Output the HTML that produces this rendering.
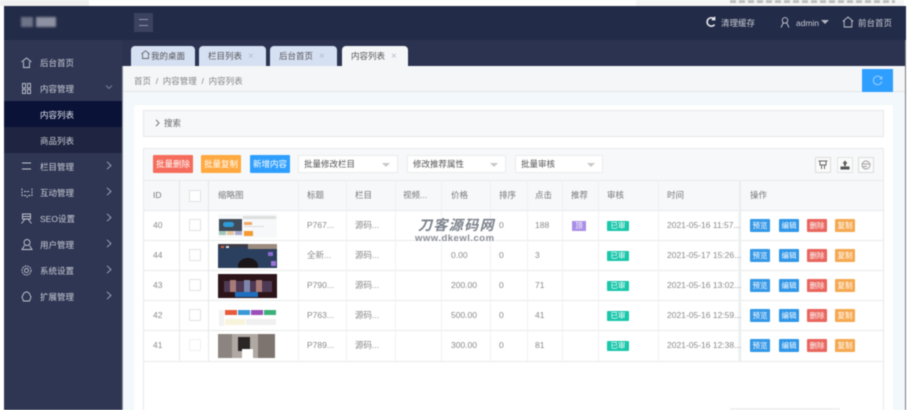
<!DOCTYPE html>
<html lang="zh">
<head>
<meta charset="utf-8">
<title>内容列表</title>
<style>
html,body{margin:0;padding:0;background:#fff}
body{width:911px;height:410px;overflow:hidden;position:relative;font-family:"Liberation Sans","Noto Sans CJK SC",sans-serif;font-size:8.5px;color:#666}
#w{position:absolute;left:0;top:0;width:911px;height:410px;filter:blur(.5px)}
.a{position:absolute;white-space:nowrap}
.b{position:absolute}
.m{color:#c9ccd6;line-height:12px}
.ico{position:absolute;fill:none;stroke:#c4c7d2;stroke-width:.9}
.btn{position:absolute;color:#fff;text-align:center;border-radius:1px}
.sel{position:absolute;top:155px;height:18px;background:#fff;border:1px solid #ececec;box-sizing:border-box;line-height:16px;padding-left:5px;color:#555}
.sel i{position:absolute;right:7px;top:7px;border:4px solid transparent;border-top:4px solid #c8c8c8;border-bottom:0}
.v{position:absolute;width:1px;background:#f0f1f3}
.h{position:absolute;left:143px;width:741px;height:1px;background:#e9eaeb}
.th,.td{position:absolute;line-height:12px;white-space:nowrap}
.th{color:#777;top:189px}
.td{color:#8a8a8a}
.cb{position:absolute;left:189px;width:10px;height:10px;background:#fff;border:1px solid #e2e2e2;border-radius:1px}
.op{position:absolute;width:20px;height:13px;line-height:13px;font-size:7.5px;color:#fff;text-align:center;border-radius:1px}
.st{position:absolute;left:607px;width:22px;height:10px;line-height:10px;background:#1ac7ab;color:#fff;font-size:7.5px;text-align:center;border-radius:1px}
.th1{position:absolute;left:218px;width:59px;height:24px;overflow:hidden}
.th1 div{position:absolute}
.tab{position:absolute;top:46px;height:20px;line-height:21px;background:#d6e0f3;border-radius:4px 4px 0 0;color:#555;padding-left:9px;box-sizing:border-box}
.tab span{color:#b4bccd;margin-left:6px;font-size:10px}
</style>
</head>
<body>
<div id="w">
<!-- top strip -->
<div class="b" style="left:0;top:0;width:89px;height:6px;background:#f0f0f0"></div>
<div class="b" style="left:636px;top:0;width:268px;height:6px;background:#f5f5f5"></div>
<div class="b" style="left:730px;top:0;width:165px;height:3px;background:repeating-linear-gradient(90deg,#bdbdbd 0 6px,#f0f0f0 6px 9px)"></div>

<!-- header -->
<div class="b" style="left:4px;top:6px;width:902px;height:34px;background:#222b47"></div>
<div class="b" style="left:21px;top:17px;width:12px;height:10px;background:#6d7388;filter:blur(1px)"></div>
<div class="b" style="left:36px;top:17px;width:20px;height:10px;background:#8d91a1;filter:blur(1px)"></div>
<div class="b" style="left:134px;top:13px;width:19px;height:19px;background:#3a4260"></div>
<div class="b" style="left:139px;top:19px;width:9px;height:1px;background:#8f94a6"></div>
<div class="b" style="left:139px;top:25px;width:9px;height:1px;background:#8f94a6"></div>

<svg class="ico" style="left:705px;top:16px;stroke:#e6e8ee;stroke-width:1.6" width="11" height="12" viewBox="0 0 11 12"><path d="M9.500 3.200A4.200 4.200 0 1 0 9.600 8.600M9.600 .8V3.600H6.800"/></svg>
<div class="a" style="left:721px;top:17px;color:#c9ccd6;line-height:12px">清理缓存</div>
<svg class="ico" style="left:780px;top:17px" width="10" height="11" viewBox="0 0 10 11"><circle cx="5" cy="3.400" r="2.800"/><path d="M1 10.500L3.200 6M9 10.500L6.800 6"/></svg>
<div class="a" style="left:796px;top:17px;color:#c9ccd6;line-height:12px">admin</div>
<div class="b" style="left:821px;top:20px;border:4px solid transparent;border-top:4px solid #b4b7c2;border-bottom:0"></div>
<svg class="ico" style="left:842px;top:16px" width="12" height="12" viewBox="0 0 12 12"><path d="M.8 5.500L6 1l5.200 4.500M2.200 4.600V11H9.800V4.600"/></svg>
<div class="a" style="left:858px;top:17px;color:#c9ccd6;line-height:12px">前台首页</div>

<!-- tab bar -->
<div class="b" style="left:122px;top:40px;width:784px;height:26px;background:#2b3350"></div>
<div class="tab" style="left:131px;width:64px;padding-left:20px">我的桌面</div>
<svg class="ico" style="left:141px;top:50px;stroke:#666" width="9" height="9" viewBox="0 0 9 9"><path d="M.5 4L4.500 .8 8.500 4M1.500 3.500V8.500H7.500V3.500"/></svg>
<div class="tab" style="left:199px;width:67px">栏目列表<span>×</span></div>
<div class="tab" style="left:270px;width:67px">后台首页<span>×</span></div>
<div class="tab" style="left:342px;width:66px;background:#f5f6f8">内容列表<span>×</span></div>

<!-- sidebar -->
<div class="b" style="left:4px;top:40px;width:118px;height:370px;background:#2f3653"></div>
<div class="b" style="left:122px;top:66px;width:1px;height:344px;background:#8c8f9b"></div>
<div class="b" style="left:4px;top:101px;width:118px;height:26px;background:#0b1238"></div>
<div class="b" style="left:4px;top:127px;width:118px;height:26px;background:#1f2540"></div>

<svg class="ico" style="left:21px;top:57px" width="11" height="11" viewBox="0 0 11 11"><path d="M.5 5L5.500 1l5 4M2.500 4.500V10.500H8.500V4.500"/></svg>
<div class="a m" style="left:40px;top:57px">后台首页</div>
<svg class="ico" style="left:21px;top:83px" width="11" height="11" viewBox="0 0 11 11"><rect x="1.500" y=".5" width="3" height="4.500"/><rect x="6.500" y=".5" width="3" height="4.500"/><rect x="1.500" y="6.500" width="3" height="4"/><rect x="6.500" y="6.500" width="3" height="4"/></svg>
<div class="a m" style="left:40px;top:83px">内容管理</div>
<svg class="ico" style="left:105px;top:84px;stroke:#80859a" width="8" height="6" viewBox="0 0 8 6"><path d="M1 1.500L4 4.500 7 1.500"/></svg>
<div class="a" style="left:40px;top:109px;color:#e0e3ea;line-height:12px">内容列表</div>
<div class="a" style="left:40px;top:135px;color:#c9ccd6;line-height:12px">商品列表</div>

<svg class="ico" style="left:21px;top:161px" width="11" height="10" viewBox="0 0 11 10"><path d="M1 2H10M1 8H10"/></svg>
<div class="a m" style="left:40px;top:161px">栏目管理</div>
<svg class="ico" style="left:21px;top:187px" width="12" height="11" viewBox="0 0 12 11"><path d="M1 1.500V8.500H5L6 10 7 8.500H11V1.500M3 4.500H9" stroke-dasharray="2 1"/></svg>
<div class="a m" style="left:40px;top:187px">互动管理</div>
<svg class="ico" style="left:21px;top:213px" width="11" height="11" viewBox="0 0 11 11"><path d="M1.500 1H9.500V6H1.500ZM1.500 3.500H9.500M.5 10.500L4 6M10.500 10.500L7 6"/></svg>
<div class="a m" style="left:40px;top:213px">SEO设置</div>
<svg class="ico" style="left:21px;top:239px" width="12" height="11" viewBox="0 0 12 11"><circle cx="6" cy="3.500" r="3"/><path d="M3.500 6.500L1 10.500H11L8.500 6.500"/></svg>
<div class="a m" style="left:40px;top:239px">用户管理</div>
<svg class="ico" style="left:21px;top:265px" width="11" height="11" viewBox="0 0 11 11"><circle cx="5.500" cy="5.500" r="4.500" stroke-dasharray="2 .7"/><circle cx="5.500" cy="5.500" r="2"/></svg>
<div class="a m" style="left:40px;top:265px">系统设置</div>
<svg class="ico" style="left:21px;top:291px" width="11" height="11" viewBox="0 0 11 11"><path d="M3 2L5.500 .8 8 2 10 6 8.500 10H2.500L1 6Z"/></svg>
<div class="a m" style="left:40px;top:291px">扩展管理</div>

<svg class="ico" style="left:106px;top:161px;stroke:#a4a8b8" width="6" height="9" viewBox="0 0 6 9"><path d="M1 .8L5 4.500 1 8.200"/></svg>
<svg class="ico" style="left:106px;top:187px;stroke:#a4a8b8" width="6" height="9" viewBox="0 0 6 9"><path d="M1 .8L5 4.500 1 8.200"/></svg>
<svg class="ico" style="left:106px;top:213px;stroke:#a4a8b8" width="6" height="9" viewBox="0 0 6 9"><path d="M1 .8L5 4.500 1 8.200"/></svg>
<svg class="ico" style="left:106px;top:239px;stroke:#a4a8b8" width="6" height="9" viewBox="0 0 6 9"><path d="M1 .8L5 4.500 1 8.200"/></svg>
<svg class="ico" style="left:106px;top:265px;stroke:#a4a8b8" width="6" height="9" viewBox="0 0 6 9"><path d="M1 .8L5 4.500 1 8.200"/></svg>
<svg class="ico" style="left:106px;top:291px;stroke:#a4a8b8" width="6" height="9" viewBox="0 0 6 9"><path d="M1 .8L5 4.500 1 8.200"/></svg>

<!-- content background -->
<div class="b" style="left:123px;top:66px;width:782px;height:26px;background:#f5f6f8;border-bottom:1px solid #e4e6e9;box-sizing:border-box"></div>
<div class="b" style="left:123px;top:92px;width:782px;height:318px;background:#f2f8fc"></div>
<div class="b" style="left:905px;top:40px;width:1px;height:370px;background:#77797f"></div>
<div class="a" style="left:134px;top:75px;color:#858585;line-height:12px">首页&nbsp;&nbsp;/&nbsp;&nbsp;内容管理&nbsp;&nbsp;/&nbsp;&nbsp;内容列表</div>
<div class="b" style="left:862px;top:69px;width:31px;height:23px;background:#2f9fff"></div>
<svg class="ico" style="left:872px;top:75px;stroke:#a9d5ff" width="11" height="11" viewBox="0 0 11 11"><path d="M9.500 3.500A4.300 4.300 0 1 0 9.800 6.500M9.800 1.500V3.800H7.500"/></svg>

<!-- card -->
<div class="b" style="left:134px;top:105px;width:759px;height:305px;background:#fff"></div>
<div class="b" style="left:143px;top:110px;width:741px;height:27px;background:#f7f8f9;border:1px solid #e6e7e9;box-sizing:border-box"></div>
<svg class="ico" style="left:155px;top:119px;stroke:#666" width="5" height="8" viewBox="0 0 5 8"><path d="M1 .8L4 4 1 7.200"/></svg>
<div class="a" style="left:164px;top:117px;color:#666;line-height:12px">搜索</div>

<!-- table frame -->
<div class="b" style="left:143px;top:148px;width:741px;height:262px;border:1px solid #e8e9ea;border-bottom:0;box-sizing:border-box"></div>
<div class="b" style="left:144px;top:149px;width:739px;height:61px;background:#f7f8f9"></div>
<div class="h" style="top:180px"></div>
<div class="h" style="top:210px"></div>
<div class="h" style="top:240px"></div>
<div class="h" style="top:270px"></div>
<div class="h" style="top:300px"></div>
<div class="h" style="top:330px"></div>
<div class="h" style="top:361px"></div>

<div class="v" style="left:179px;top:180px;height:181px;background:#e6e7e9"></div>
<div class="v" style="left:208px;top:180px;height:181px;background:#e6e7e9"></div>
<div class="v" style="left:298px;top:180px;height:181px"></div>
<div class="v" style="left:346px;top:180px;height:181px"></div>
<div class="v" style="left:395px;top:180px;height:181px"></div>
<div class="v" style="left:441px;top:180px;height:181px"></div>
<div class="v" style="left:490px;top:180px;height:181px"></div>
<div class="v" style="left:527px;top:180px;height:181px"></div>
<div class="v" style="left:562px;top:180px;height:181px"></div>
<div class="v" style="left:598px;top:180px;height:181px"></div>
<div class="v" style="left:658px;top:180px;height:181px"></div>
<div class="b" style="left:738px;top:180px;width:3px;height:181px;background:linear-gradient(90deg,#f7f8f9,#e6e7e9)"></div>

<!-- toolbar -->
<div class="btn" style="left:153px;top:155px;width:40px;height:18px;line-height:18px;background:#f56c5c">批量删除</div>
<div class="btn" style="left:201px;top:155px;width:40px;height:18px;line-height:18px;background:#ffa940">批量复制</div>
<div class="btn" style="left:250px;top:155px;width:40px;height:18px;line-height:18px;background:#2f9fff">新增内容</div>
<div class="sel" style="left:298px;width:100px">批量修改栏目<i></i></div>
<div class="sel" style="left:407px;width:99px">修改推荐属性<i></i></div>
<div class="sel" style="left:515px;width:88px">批量审核<i></i></div>

<div class="b" style="left:815px;top:157px;width:16px;height:16px;border:1px solid #dcdcdc;box-sizing:border-box;background:#fafafa"></div>
<svg class="ico" style="left:818px;top:160px;stroke:#666" width="10" height="10" viewBox="0 0 10 10"><path d="M.5 1H9.500M2 1V5H8V1M3.500 5V9M6.500 5V9" stroke-width="1"/></svg>
<div class="b" style="left:837px;top:157px;width:16px;height:16px;border:1px solid #e4e4e4;box-sizing:border-box;background:#fafafa"></div>
<svg class="b" style="left:840px;top:160px" width="10" height="10" viewBox="0 0 10 10"><path d="M5 .5L7.500 3.500H6V6H4V3.500H2.500ZM.5 6.500H9.500V9.500H.5Z" fill="#555"/></svg>
<div class="b" style="left:858px;top:157px;width:16px;height:16px;border:1px solid #dcdcdc;box-sizing:border-box;background:#fafafa"></div>
<svg class="ico" style="left:861px;top:160px;stroke:#999" width="10" height="10" viewBox="0 0 10 10"><circle cx="5" cy="5" r="4"/><path d="M2 4H8M2 6.500H6"/></svg>

<!-- header row -->
<div class="th" style="left:153px">ID</div>
<div class="cb" style="top:190px"></div>
<div class="th" style="left:218px">缩略图</div>
<div class="th" style="left:307px">标题</div>
<div class="th" style="left:355px">栏目</div>
<div class="th" style="left:403px">视频...</div>
<div class="th" style="left:451px">价格</div>
<div class="th" style="left:499px">排序</div>
<div class="th" style="left:535px">点击</div>
<div class="th" style="left:571px">推荐</div>
<div class="th" style="left:607px">审核</div>
<div class="th" style="left:667px">时间</div>
<div class="th" style="left:750px">操作</div>

<!-- row 40 -->
<div class="td" style="left:153px;top:219px">40</div><div class="cb" style="top:219px"></div>
<div class="th1" style="top:214px;background:#f7f8f9">
  <div style="left:1px;top:5px;width:23px;height:12px;background:#3f4b58"></div>
  <div style="left:5px;top:8px;width:11px;height:5px;background:#2e9bd8;border-radius:3px"></div>
  <div style="left:1px;top:17px;width:7px;height:4px;background:#9fc7b8"></div>
  <div style="left:9px;top:17px;width:7px;height:4px;background:#e4c49a"></div>
  <div style="left:17px;top:17px;width:7px;height:4px;background:#a9a9d0"></div>
  <div style="left:25px;top:2px;width:33px;height:3px;background:#dedede"></div>
  <div style="left:26px;top:8px;width:8px;height:3px;background:#f0a868"></div>
  <div style="left:26px;top:12px;width:20px;height:1px;background:#ddd"></div>
  <div style="left:26px;top:17px;width:9px;height:5px;background:#f39a30"></div>
</div>
<div class="td" style="left:307px;top:219px">P767...</div>
<div class="td" style="left:355px;top:219px">源码...</div>
<div class="td" style="left:499px;top:219px">0</div>
<div class="td" style="left:535px;top:219px">188</div>
<div class="b" style="left:572px;top:221px;width:14px;height:10px;line-height:10px;background:#a98ee6;color:#fff;text-align:center;font-size:7.5px">顶</div>
<div class="st" style="top:221px">已审</div>
<div class="td" style="left:667px;top:219px">2021-05-16 11:57...</div>
<div class="op" style="left:750px;top:219px;background:#3498e8">预览</div><div class="op" style="left:779px;top:219px;background:#2f96e8">编辑</div><div class="op" style="left:807px;top:219px;background:#e9645c">删除</div><div class="op" style="left:835px;top:219px;background:#f5a84f">复制</div>

<!-- row 44 -->
<div class="td" style="left:153px;top:249px">44</div><div class="cb" style="top:249px"></div>
<div class="th1" style="top:244px;background:#2b3f5e">
  <div style="left:0;top:0;width:59px;height:3px;background:#3d3a44"></div>
  <div style="left:30px;top:0;width:29px;height:5px;background:#9c8c80"></div>
  <div style="left:3px;top:2px;width:3px;height:2px;background:#d8603c"></div>
  <div style="left:8px;top:2px;width:3px;height:2px;background:#e0e0e0"></div>
  <div style="left:20px;top:14px;width:20px;height:16px;background:#1a1517;border-radius:50%"></div>
  <div style="left:50px;top:8px;width:5px;height:4px;background:#8a6ad0"></div>
  <div style="left:53px;top:17px;width:5px;height:5px;background:#9a72d8"></div>
</div>
<div class="td" style="left:307px;top:249px">全新...</div>
<div class="td" style="left:355px;top:249px">源码...</div>
<div class="td" style="left:451px;top:249px">0.00</div>
<div class="td" style="left:499px;top:249px">0</div>
<div class="td" style="left:535px;top:249px">3</div>
<div class="st" style="top:251px">已审</div>
<div class="td" style="left:667px;top:249px">2021-05-17 15:26...</div>
<div class="op" style="left:750px;top:249px;background:#3498e8">预览</div><div class="op" style="left:779px;top:249px;background:#2f96e8">编辑</div><div class="op" style="left:807px;top:249px;background:#e9645c">删除</div><div class="op" style="left:835px;top:249px;background:#f5a84f">复制</div>

<!-- row 43 -->
<div class="td" style="left:153px;top:279px">43</div><div class="cb" style="top:279px"></div>
<div class="th1" style="top:274px;background:#2c1418">
  <div style="left:6px;top:7px;width:48px;height:11px;background:#4f3a55"></div>
  <div style="left:12px;top:6px;width:6px;height:12px;background:#a87a78"></div>
  <div style="left:26px;top:6px;width:6px;height:12px;background:#7d86ad"></div>
  <div style="left:38px;top:6px;width:6px;height:12px;background:#a87a78"></div>
  <div style="left:17px;top:18px;width:23px;height:5px;background:#1f6fc0"></div>
</div>
<div class="td" style="left:307px;top:279px">P790...</div>
<div class="td" style="left:355px;top:279px">源码...</div>
<div class="td" style="left:451px;top:279px">200.00</div>
<div class="td" style="left:499px;top:279px">0</div>
<div class="td" style="left:535px;top:279px">71</div>
<div class="st" style="top:281px">已审</div>
<div class="td" style="left:667px;top:279px">2021-05-16 13:02...</div>
<div class="op" style="left:750px;top:279px;background:#3498e8">预览</div><div class="op" style="left:779px;top:279px;background:#2f96e8">编辑</div><div class="op" style="left:807px;top:279px;background:#e9645c">删除</div><div class="op" style="left:835px;top:279px;background:#f5a84f">复制</div>

<!-- row 42 -->
<div class="td" style="left:153px;top:309px">42</div><div class="cb" style="top:309px"></div>
<div class="th1" style="top:304px;background:#fff">
  <div style="left:7px;top:6px;width:12px;height:5px;background:#e85a3c"></div>
  <div style="left:20px;top:6px;width:12px;height:5px;background:#3a9ad8"></div>
  <div style="left:33px;top:6px;width:12px;height:5px;background:#9a50b8"></div>
  <div style="left:46px;top:6px;width:12px;height:5px;background:#3cb078"></div>
  <div style="left:7px;top:15px;width:20px;height:6px;background:#f8f4dc"></div>
  <div style="left:28px;top:15px;width:30px;height:6px;background:#f0f0f0"></div>
  <div style="left:1px;top:6px;width:5px;height:16px;background:#f2f2f2"></div>
</div>
<div class="td" style="left:307px;top:309px">P763...</div>
<div class="td" style="left:355px;top:309px">源码...</div>
<div class="td" style="left:451px;top:309px">500.00</div>
<div class="td" style="left:499px;top:309px">0</div>
<div class="td" style="left:535px;top:309px">41</div>
<div class="st" style="top:311px">已审</div>
<div class="td" style="left:667px;top:309px">2021-05-16 12:59...</div>
<div class="op" style="left:750px;top:309px;background:#3498e8">预览</div><div class="op" style="left:779px;top:309px;background:#2f96e8">编辑</div><div class="op" style="left:807px;top:309px;background:#e9645c">删除</div><div class="op" style="left:835px;top:309px;background:#f5a84f">复制</div>

<!-- row 41 -->
<div class="td" style="left:153px;top:339px">41</div><div class="cb" style="top:339px;border-color:#f0f0f0"></div>
<div class="th1" style="top:334px;background:#b0a8a2">
  <div style="left:0;top:0;width:14px;height:24px;background:#8c8480"></div>
  <div style="left:20px;top:3px;width:12px;height:14px;background:#2a2626"></div>
  <div style="left:40px;top:0;width:17px;height:24px;background:#7d7470"></div>
  <div style="left:57px;top:0;width:2px;height:24px;background:#fff"></div>
  <div style="left:24px;top:15px;width:11px;height:9px;background:#fff"></div>
</div>
<div class="td" style="left:307px;top:339px">P789...</div>
<div class="td" style="left:355px;top:339px">源码...</div>
<div class="td" style="left:451px;top:339px">300.00</div>
<div class="td" style="left:499px;top:339px">0</div>
<div class="td" style="left:535px;top:339px">81</div>
<div class="st" style="top:341px">已审</div>
<div class="td" style="left:667px;top:339px">2021-05-16 12:38...</div>
<div class="op" style="left:750px;top:339px;background:#3498e8">预览</div><div class="op" style="left:779px;top:339px;background:#2f96e8">编辑</div><div class="op" style="left:807px;top:339px;background:#e9645c">删除</div><div class="op" style="left:835px;top:339px;background:#f5a84f">复制</div>

<!-- watermark -->
<div class="a" style="left:418px;top:218px;font-size:14px;line-height:15px;font-weight:bold;font-style:italic;color:#7a808a;letter-spacing:1.400px">刀客源码网</div>
<div class="a" style="left:415px;top:233px;font-size:9.500px;line-height:12px;font-weight:bold;color:#878c95;letter-spacing:.5px">www.dkewl.com</div>

<!-- pagination hint -->
<div class="b" style="left:730px;top:408px;width:110px;height:2px;background:#f0f0f0"></div>
</div>
</body>
</html>
